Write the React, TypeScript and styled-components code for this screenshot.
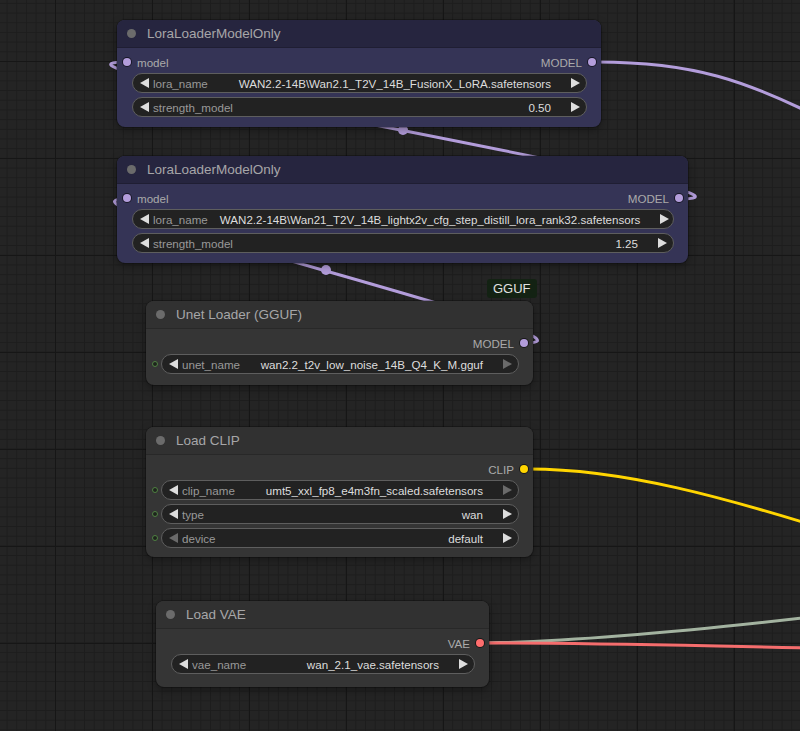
import React from 'react';
import styled, { createGlobalStyle } from 'styled-components';

const GlobalStyle = createGlobalStyle`
  html, body {
    margin: 0;
    padding: 0;
    background: #232323;
  }
  body {
    font-family: "Liberation Sans", Arial, sans-serif;
  }
`;

const Canvas = styled.div`
  position: relative;
  width: 800px;
  height: 731px;
  overflow: hidden;
  background-color: #242424;
  background-image:
    linear-gradient(to right, #161616 1px, transparent 1px),
    linear-gradient(to bottom, #161616 1px, transparent 1px),
    linear-gradient(to right, #1d1d1d 1px, transparent 1px),
    linear-gradient(to bottom, #1d1d1d 1px, transparent 1px);
  background-size: 97px 97px, 97px 97px, 9.7px 9.7px, 9.7px 9.7px;
  background-position: 55px 61px;
`;

const Wires = styled.svg`
  position: absolute;
  left: 0;
  top: 0;
  width: 800px;
  height: 731px;
  pointer-events: none;
`;

type Theme = 'blue' | 'gray';

const titleColors: Record<Theme, string> = { blue: '#26253f', gray: '#313131' };
const bodyColors: Record<Theme, string> = { blue: '#353456', gray: '#353535' };

const NodeBox = styled.div<{ $x: number; $y: number; $w: number; $theme: Theme }>`
  position: absolute;
  left: ${(p) => p.$x}px;
  top: ${(p) => p.$y}px;
  width: ${(p) => p.$w}px;
  border-radius: 8px;
  background: ${(p) => bodyColors[p.$theme]};
  box-shadow: 0 0 0 1px rgba(0, 0, 0, 0.25), 0 3px 8px rgba(0, 0, 0, 0.35);
`;

const TitleBar = styled.div<{ $theme: Theme }>`
  height: 28px;
  display: flex;
  align-items: center;
  padding-left: 10px;
  gap: 11px;
  border-radius: 8px 8px 0 0;
  background: ${(p) => titleColors[p.$theme]};
  border-bottom: 1px solid rgba(0, 0, 0, 0.18);
  box-sizing: border-box;
`;

const TitleDot = styled.span`
  width: 9px;
  height: 9px;
  border-radius: 50%;
  background: #6b6b6b;
`;

const TitleText = styled.span`
  font-size: 13.5px;
  color: #a6a6a8;
  white-space: nowrap;
`;

const Body = styled.div<{ $pb: number }>`
  padding: 4px 0 ${(p) => p.$pb}px;
`;

const SlotRow = styled.div`
  height: 20px;
  margin-bottom: 1px;
  display: flex;
  align-items: center;
  justify-content: space-between;
  padding: 0 5px 0 6px;
  font-size: 11.6px;
  color: #aaaaaa;
`;

const Slot = styled.div`
  display: flex;
  align-items: center;
  gap: 6px;
`;

const SlotDot = styled.span<{ $color: string }>`
  width: 8px;
  height: 8px;
  border-radius: 50%;
  background: ${(p) => p.$color};
  box-shadow: 0 0 0 1px rgba(0, 0, 0, 0.55);
`;

const WidgetList = styled.div`
  display: flex;
  flex-direction: column;
  gap: 4px;
`;

const WidgetRow = styled.div`
  display: flex;
  align-items: center;
  padding-right: 14px;
`;

const SocketCell = styled.div`
  width: 15px;
  flex: none;
  display: flex;
  align-items: center;
  padding-left: 6px;
  box-sizing: border-box;
`;

const Socket = styled.span`
  width: 4px;
  height: 4px;
  border-radius: 50%;
  border: 1px solid #4f8142;
  background: #1e241d;
`;

const Widget = styled.div`
  flex: 1;
  min-width: 0;
  height: 20px;
  box-sizing: border-box;
  border: 1px solid #5e5e5e;
  border-radius: 10px;
  background: #222222;
  display: flex;
  align-items: center;
  padding: 0 6px 0 7px;
  font-size: 11.6px;
  white-space: nowrap;
  overflow: hidden;
`;

const WLabel = styled.span`
  color: #999999;
  margin-left: 4px;
  margin-right: 12px;
  flex: 1 0 auto;
`;

const WValue = styled.span`
  color: #dddddd;
  margin-right: 20px;
  flex: none;
`;

const ArrowSvg = styled.svg`
  flex: none;
`;

const Badge = styled.div<{ $x: number; $y: number }>`
  position: absolute;
  left: ${(p) => p.$x}px;
  top: ${(p) => p.$y}px;
  height: 19px;
  padding: 0 6px;
  display: flex;
  align-items: center;
  border-radius: 3px;
  background: #132213;
  color: #e0e0e0;
  font-size: 13px;
`;

const Arrow = ({ dir, off }: { dir: 'l' | 'r'; off?: boolean }) => (
  <ArrowSvg width="9" height="10" viewBox="0 0 9 10">
    <polygon
      points={dir === 'l' ? '9,0 9,10 0,5' : '0,0 0,10 9,5'}
      fill={off ? '#6a6a6a' : '#dddddd'}
    />
  </ArrowSvg>
);

type WidgetDef = { name: string; value: string; socket?: boolean; leftOff?: boolean; rightOff?: boolean };
type SlotDef = { label: string; color: string };
type NodeDef = {
  title: string;
  x: number;
  y: number;
  w: number;
  theme: Theme;
  input?: SlotDef;
  output: SlotDef;
  widgets: WidgetDef[];
  pb?: number;
};

const MODEL = '#b39ddb';

const nodes: NodeDef[] = [
  {
    title: 'LoraLoaderModelOnly',
    x: 117,
    y: 20,
    w: 484,
    theme: 'blue',
    input: { label: 'model', color: MODEL },
    output: { label: 'MODEL', color: MODEL },
    widgets: [
      { name: 'lora_name', value: 'WAN2.2-14B\\Wan2.1_T2V_14B_FusionX_LoRA.safetensors' },
      { name: 'strength_model', value: '0.50' },
    ],
  },
  {
    title: 'LoraLoaderModelOnly',
    x: 117,
    y: 156,
    w: 571,
    theme: 'blue',
    input: { label: 'model', color: MODEL },
    output: { label: 'MODEL', color: MODEL },
    widgets: [
      { name: 'lora_name', value: 'WAN2.2-14B\\Wan21_T2V_14B_lightx2v_cfg_step_distill_lora_rank32.safetensors' },
      { name: 'strength_model', value: '1.25' },
    ],
  },
  {
    title: 'Unet Loader (GGUF)',
    x: 146,
    y: 301,
    w: 387,
    theme: 'gray',
    output: { label: 'MODEL', color: MODEL },
    widgets: [{ name: 'unet_name', value: 'wan2.2_t2v_low_noise_14B_Q4_K_M.gguf', socket: true, rightOff: true }],
    pb: 11,
  },
  {
    title: 'Load CLIP',
    x: 146,
    y: 427,
    w: 387,
    theme: 'gray',
    output: { label: 'CLIP', color: '#ffd500' },
    widgets: [
      { name: 'clip_name', value: 'umt5_xxl_fp8_e4m3fn_scaled.safetensors', socket: true, rightOff: true },
      { name: 'type', value: 'wan', socket: true },
      { name: 'device', value: 'default', socket: true, leftOff: true },
    ],
    pb: 9,
  },
  {
    title: 'Load VAE',
    x: 156,
    y: 601,
    w: 333,
    theme: 'gray',
    output: { label: 'VAE', color: '#ff6e6e' },
    widgets: [{ name: 'vae_name', value: 'wan_2.1_vae.safetensors' }],
    pb: 13,
  },
];

function GraphNode({ node }: { node: NodeDef }) {
  return (
    <NodeBox $x={node.x} $y={node.y} $w={node.w} $theme={node.theme}>
      <TitleBar $theme={node.theme}>
        <TitleDot />
        <TitleText>{node.title}</TitleText>
      </TitleBar>
      <Body $pb={node.pb ?? 10}>
        <SlotRow>
          <Slot>
            {node.input && (
              <>
                <SlotDot $color={node.input.color} />
                {node.input.label}
              </>
            )}
          </Slot>
          <Slot>
            {node.output.label}
            <SlotDot $color={node.output.color} />
          </Slot>
        </SlotRow>
        <WidgetList>
          {node.widgets.map((w) => (
            <WidgetRow key={w.name}>
              <SocketCell>{w.socket && <Socket />}</SocketCell>
              <Widget>
                <Arrow dir="l" off={w.leftOff} />
                <WLabel>{w.name}</WLabel>
                <WValue>{w.value}</WValue>
                <Arrow dir="r" off={w.rightOff} />
              </Widget>
            </WidgetRow>
          ))}
        </WidgetList>
      </Body>
    </NodeBox>
  );
}

function App() {
  return (
    <>
      <GlobalStyle />
      <Canvas>
        <Wires viewBox="0 0 800 731">
          <g fill="none" strokeWidth="3" strokeLinecap="round">
            <path d="M679 199 C821 199 -15 62 127 62" stroke={MODEL} />
            <path d="M525 343 C631 343 21 199 127 199" stroke={MODEL} />
            <path d="M597 62 C690 62 745 78 840 128" stroke={MODEL} />
            <path d="M529 469 C620 469 720 495 860 540" stroke="#ffd500" />
            <path d="M470 643 C560 643 700 630 820 616" stroke="#a3b3a0" />
            <path d="M485 643 C600 643 700 646 820 648" stroke="#f56d6d" />
          </g>
          <circle cx="403" cy="130" r="5" fill={MODEL} />
          <circle cx="326" cy="270" r="5" fill={MODEL} />
        </Wires>
        {nodes.map((n, i) => (
          <GraphNode key={i} node={n} />
        ))}
        <Badge $x={487} $y={279}>GGUF</Badge>
      </Canvas>
    </>
  );
}

export default App;
